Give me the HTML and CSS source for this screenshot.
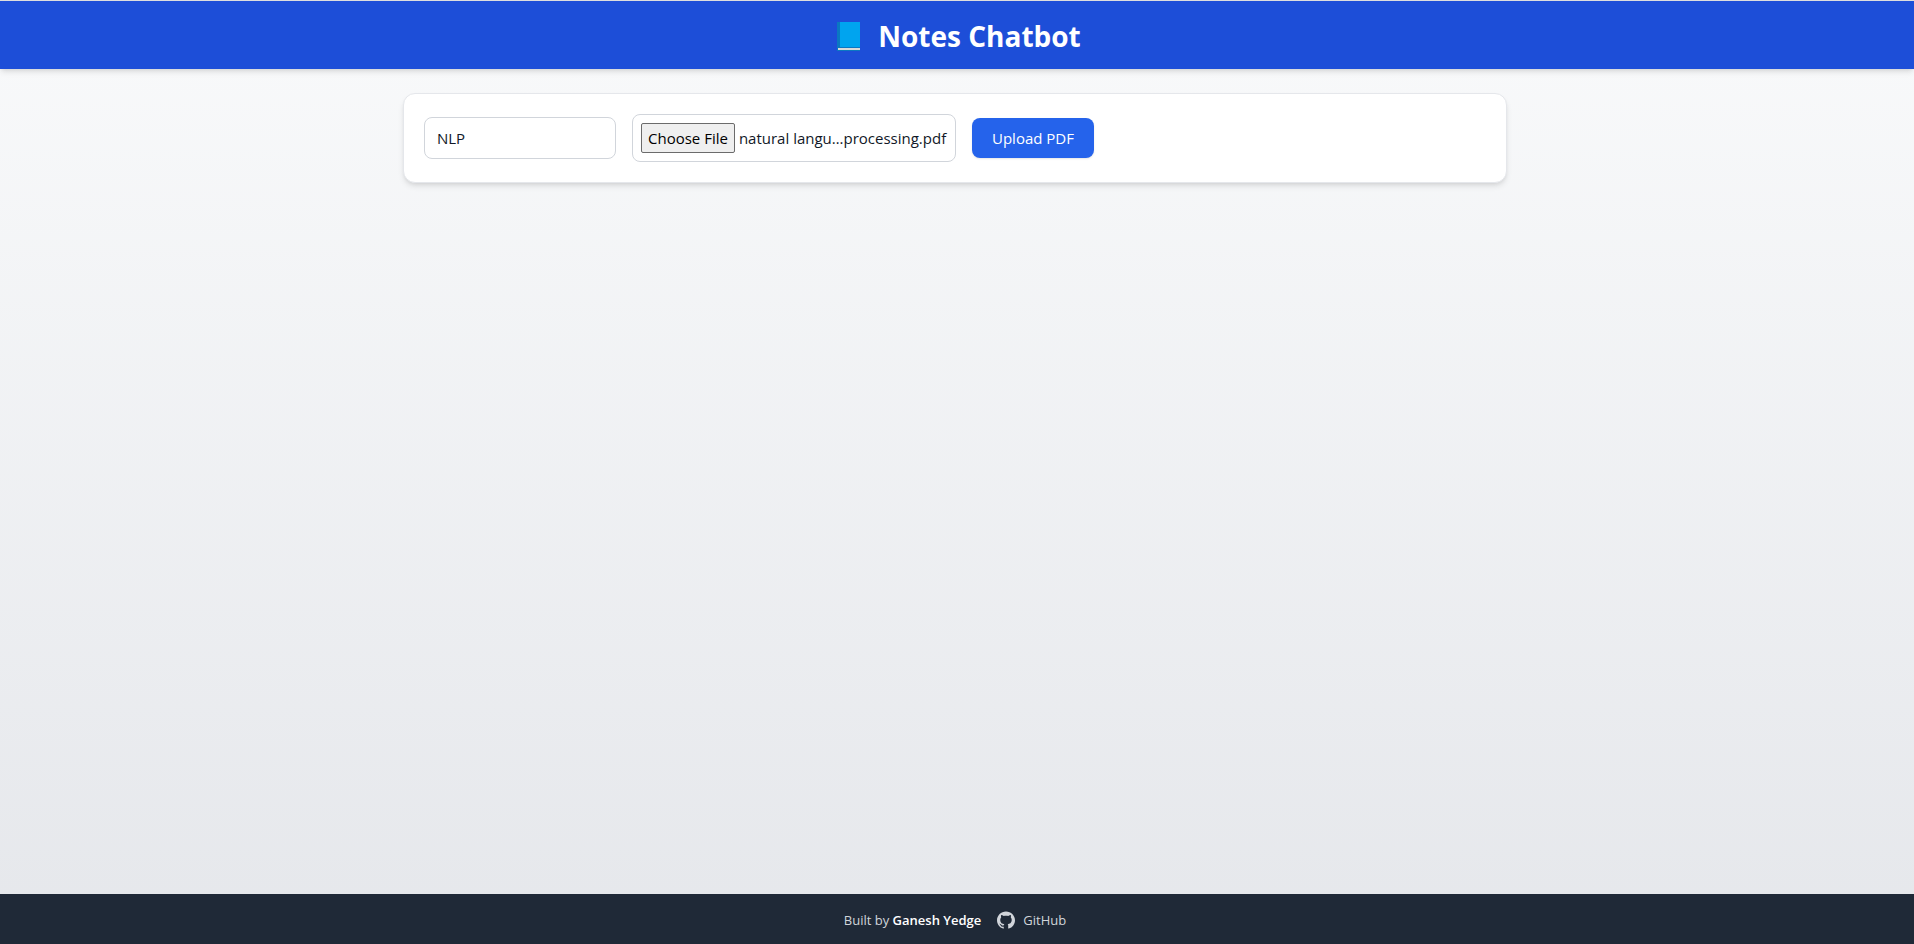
FILE: index.html
```html
<!DOCTYPE html>
<html lang="en">
<head>
  <meta charset="utf-8">
  <meta name="viewport" content="width=device-width, initial-scale=1">
  <title>Notes Chatbot</title>
  <link rel="stylesheet" href="styles.css">
</head>
<body>
  <header class="site-header">
    <h1 class="site-title">
      <svg class="book-icon" viewBox="0 0 23 29" aria-hidden="true">
        <path fill="#0a78c2" d="M0 0h23v29H0z"/>
        <path fill="#00a4ef" d="M3 0h20v25H3z"/>
        <path fill="#d9d9d9" d="M1 26h22v2H1z"/>
      </svg>
      <span>Notes Chatbot</span>
    </h1>
  </header>

  <main class="content">
    <form class="upload-card">
      <input class="field subject-field" type="text" value="NLP" aria-label="Subject">
      <input class="field file-field" type="file" accept="application/pdf" aria-label="PDF file">
      <button class="upload-button" type="button">Upload PDF</button>
    </form>
  </main>

  <footer class="site-footer">
    <p class="credit">Built by <strong>Ganesh Yedge</strong></p>
    <a class="github-link" href="#">
      <svg class="github-icon" viewBox="0 0 24 24" fill="currentColor" aria-hidden="true">
        <path d="M12 .5C5.37.5 0 5.78 0 12.292c0 5.211 3.438 9.63 8.205 11.188.6.111.82-.254.82-.567 0-.28-.01-1.022-.015-2.005-3.338.711-4.042-1.582-4.042-1.582-.546-1.361-1.335-1.725-1.335-1.725-1.087-.731.084-.716.084-.716 1.205.082 1.838 1.215 1.838 1.215 1.07 1.803 2.809 1.282 3.495.981.108-.763.417-1.282.76-1.577-2.665-.295-5.466-1.309-5.466-5.827 0-1.287.465-2.339 1.235-3.164-.135-.298-.54-1.497.105-3.121 0 0 1.005-.316 3.3 1.209.96-.262 1.98-.392 3-.398 1.02.006 2.04.136 3 .398 2.28-1.525 3.285-1.209 3.285-1.209.645 1.624.24 2.823.12 3.121.765.825 1.23 1.877 1.23 3.164 0 4.53-2.805 5.527-5.475 5.817.42.354.81 1.077.81 2.182 0 1.578-.015 2.846-.015 3.229 0 .309.21.678.825.561C20.565 21.917 24 17.495 24 12.292 24 5.78 18.627.5 12 .5z"/>
      </svg>
      <span>GitHub</span>
    </a>
  </footer>
  <script src="script.js"></script>
</body>
</html>
```
FILE: styles.css
```css
*,
*::before,
*::after {
  box-sizing: border-box;
}

body {
  display: flex;
  flex-direction: column;
  min-height: 100vh;
  margin: 0;
  border-top: 1px solid #dedede;
  background: linear-gradient(to bottom, #f9fafb, #e5e7eb);
  color: #111827;
  font: 400 15px/24px "Open Sans", "Noto Sans", sans-serif;
}

.site-header {
  padding: 17px 0 15px 4px;
  background: #1d4ed8;
  color: #fff;
  box-shadow: 0 4px 6px -1px rgb(0 0 0 / 10%), 0 2px 4px -2px rgb(0 0 0 / 10%);
}

.site-title {
  display: flex;
  justify-content: center;
  align-items: center;
  gap: 18px;
  margin: 0;
  font-size: 28px;
  font-weight: 700;
  line-height: 36px;
}

.book-icon {
  width: 23px;
  height: 29px;
}

.content {
  flex: 1;
  width: 100%;
  max-width: 1156px;
  margin: 0 auto;
  padding: 24px 28px 24px 24px;
}

.upload-card {
  display: flex;
  flex-wrap: wrap;
  align-items: center;
  gap: 16px;
  padding: 20px;
  border: 1px solid #e5e7eb;
  border-radius: 12px;
  background: #fff;
  box-shadow: 0 4px 6px -1px rgb(0 0 0 / 10%), 0 2px 4px -2px rgb(0 0 0 / 10%);
}

.field {
  border: 1px solid #d1d5db;
  border-radius: 8px;
  background: #fff;
  color: inherit;
  font: inherit;
}

.subject-field {
  width: 192px;
  padding: 8px 12px;
}

.file-field {
  width: 324px;
  padding: 8px;
}

.file-field::file-selector-button {
  height: 30px;
  padding: 1px 6px;
  border: 1px solid #6b6b6b;
  border-radius: 2px;
  background: #efefef;
  color: #000;
  font: inherit;
}

.upload-button {
  padding: 8px 20px;
  border: 0;
  border-radius: 8px;
  background: #2563eb;
  color: #fff;
  font: inherit;
  box-shadow: 0 1px 2px rgb(0 0 0 / 10%);
}

.site-footer {
  display: flex;
  justify-content: center;
  align-items: center;
  gap: 16px;
  padding: 16px 4px 14px 0;
  background: #1f2937;
  color: #d1d5db;
  font-size: 13px;
  line-height: 20px;
}

.credit {
  margin: 0;
}

.credit strong {
  color: #fff;
  font-weight: 600;
}

.github-link {
  display: flex;
  align-items: center;
  gap: 8px;
  color: inherit;
  text-decoration: none;
}

.github-icon {
  width: 18px;
  height: 18px;
}
```
FILE: script.js
```js
const selection = new DataTransfer();
selection.items.add(
  new File([""], "natural language processing.pdf", { type: "application/pdf" })
);
document.querySelector(".file-field").files = selection.files;
```
